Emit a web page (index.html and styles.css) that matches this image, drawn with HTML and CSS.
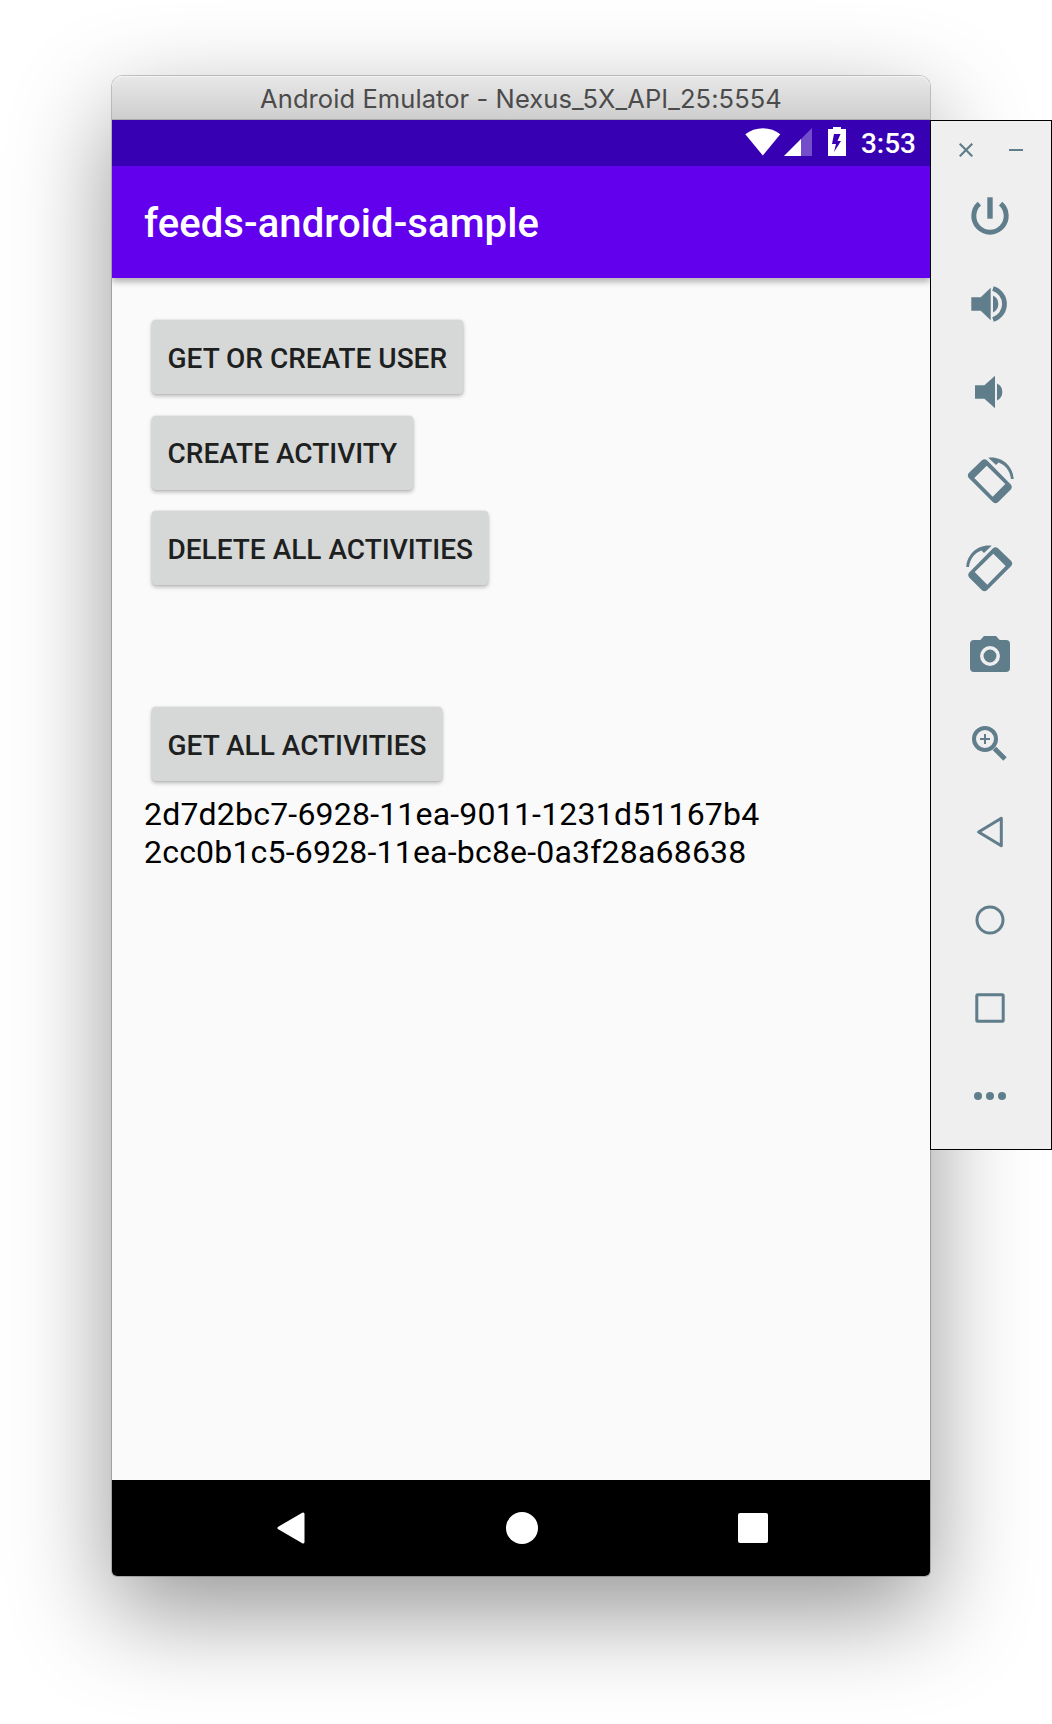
FILE: index.html
```html
<!DOCTYPE html>
<html lang="en">
<head>
<meta charset="utf-8">
<title>Android Emulator</title>
<link rel="stylesheet" href="styles.css">
</head>
<body>
<main class="desktop">
  <section class="window">
    <header class="titlebar"><span class="window-title">Android Emulator - Nexus_5X_API_25:5554</span></header>
    <div class="statusbar">
      <svg class="wifi" width="36" height="28" viewBox="0 0 36 28"><path d="M.3 6.2C10-1.9 26-1.9 35.3 6.2L17.8 27.5z"/></svg>
      <svg class="signal" width="28" height="28" viewBox="0 0 28 28"><path opacity=".3" d="M0 28 28 0v28z"/><path d="M0 28 17 11v17z"/></svg>
      <svg class="battery" width="18" height="29" viewBox="0 0 18 29"><path fill-rule="evenodd" d="M5 0h8v2h5v27H0V2h5zM6 7 4 17h4L6 25l7-11H9.500l3-7z"/></svg>
      <span class="clock">3:53</span>
    </div>
    <div class="appbar"><h1 class="app-title">feeds-android-sample</h1></div>
    <div class="content">
      <div class="actions">
        <button class="btn btn-user"><span>GET OR CREATE USER</span></button>
        <button class="btn btn-create"><span>CREATE ACTIVITY</span></button>
        <button class="btn btn-delete"><span>DELETE ALL ACTIVITIES</span></button>
      </div>
      <button class="btn btn-list"><span>GET ALL ACTIVITIES</span></button>
      <div class="ids">
        <div>2d7d2bc7-6928-11ea-9011-1231d51167b4</div>
        <div>2cc0b1c5-6928-11ea-bc8e-0a3f28a68638</div>
      </div>
    </div>
    <nav class="navbar">
      <svg width="32" height="32" viewBox="0 0 32 32"><path d="M4 16 28 2v28z" stroke="#fff" stroke-width="3" stroke-linejoin="round"/></svg>
      <svg width="32" height="32" viewBox="0 0 32 32"><circle cx="16" cy="16" r="16"/></svg>
      <svg width="32" height="32" viewBox="0 0 32 32"><rect x="1" y="1" width="30" height="30" rx="2"/></svg>
    </nav>
  </section>
  <aside class="toolbar">
    <div class="window-controls">
      <svg width="14" height="14" viewBox="0 0 14 14"><path class="line" stroke-width="2.200" d="m.7.7 12.600 12.600M13.300.7.7 13.300"/></svg>
      <svg width="14" height="14" viewBox="0 0 14 14"><path d="M0 6h14v2H0z"/></svg>
    </div>
    <svg class="tool" viewBox="-44 -44 88 88"><path class="line" stroke-width="5" d="M-10.600-12.300A16.200 16.200 0 1 0 10.600-12.300"/><path d="M-2.700-18.700h5.400V2.700h-5.400z"/></svg>
    <svg class="tool" viewBox="-44 -44 88 88"><path d="M-18.700-6.700h9.400L.7-16.300v32.600l-10-9.600h-9.400zM3-8.400a9.300 9.300 0 0 1 0 16.800z"/><path class="line" stroke-width="4.800" d="M3-15.500a16.200 16.200 0 0 1 0 31"/></svg>
    <svg class="tool" viewBox="-44 -44 88 88"><path d="M-15-6.700h9.400L5-16.200v32.400L-5.600 6.700H-15zM7-8.400a9.300 9.300 0 0 1 0 16.800z"/></svg>
    <svg class="tool" viewBox="-44 -44 88 88"><path fill-rule="evenodd" d="M-8-19.800q2.500-2 5 0L20.800 4.500q2 2.500 0 5L8 22.200q-2.500 2-5 0L-21.200-2q-2-2.500 0-5zM-3.300-14.300-15.700-2 2.700 16.700 15.300 4z"/><path d="M-1.700-22.300C12-24 23-14 23.700-1H21c-.8-8-5.500-14-12.300-16.600L6-15z"/></svg>
    <svg class="tool" viewBox="-44 -44 88 88"><g transform="scale(-1 1)"><path fill-rule="evenodd" d="M-8-19.800q2.500-2 5 0L20.800 4.500q2 2.500 0 5L8 22.200q-2.500 2-5 0L-21.200-2q-2-2.500 0-5zM-3.300-14.300-15.700-2 2.700 16.700 15.300 4z"/><path d="M-1.700-22.300C12-24 23-14 23.700-1H21c-.8-8-5.500-14-12.300-16.600L6-15z"/></g></svg>
    <svg class="tool" viewBox="-44 -44 88 88"><path d="M-16-16h6.300L-6-20H6l3.700 4H16q4 0 4 4v24q0 4-4 4h-32q-4 0-4-4v-24q0-4 4-4z"/><circle class="lens" r="8.200"/></svg>
    <svg class="tool" viewBox="-44 -44 88 88"><circle class="line" stroke-width="4" cx="-5" cy="-5" r="11"/><path class="line" stroke-width="2" d="M-10-5H0M-5-10V0"/><path class="line" stroke-width="4.800" d="M4.500 4.500 15 15"/></svg>
    <svg class="tool" viewBox="-44 -44 88 88"><path class="line" stroke-width="3" stroke-linejoin="round" d="M-11.400 0 11.300-13.700v27.400z"/></svg>
    <svg class="tool" viewBox="-44 -44 88 88"><circle class="line" stroke-width="3" r="13"/></svg>
    <svg class="tool" viewBox="-44 -44 88 88"><rect class="line" stroke-width="3" x="-13.200" y="-13.200" width="26.400" height="26.400" rx="1"/></svg>
    <svg class="tool" viewBox="-44 -44 88 88"><circle cx="-12" r="4"/><circle r="4"/><circle cx="12" r="4"/></svg>
  </aside>
</main>
</body>
</html>
```
FILE: styles.css
```css
* { box-sizing: border-box; }
body { margin: 0; background: #fff; font-family: Roboto, "Liberation Sans", sans-serif; }
svg { display: block; flex: none; }
.desktop { display: flex; align-items: flex-start; width: 1052px; height: 1724px; padding: 76px 0 0 112px; overflow: hidden; }
.window {
  display: flex; flex-direction: column; flex: none; width: 818px; height: 1500px;
  border-radius: 11px 11px 5px 5px; background: #fafafa;
  box-shadow: 0 0 0 1px rgba(0,0,0,.2), 0 36px 100px rgba(0,0,0,.42);
}
.titlebar {
  height: 44px; display: flex; align-items: center; justify-content: center;
  padding-top: 2px; border-radius: 11px 11px 0 0; border-bottom: 1px solid #aaa;
  background: linear-gradient(#e8e8e8, #cecece); box-shadow: inset 0 1px #f4f4f4;
}
.window-title { font: 400 25.500px/32px Inter, sans-serif; letter-spacing: .08px; color: #4b4b4b; white-space: nowrap; }
.statusbar { height: 46px; display: flex; align-items: flex-start; justify-content: flex-end; padding: 8px 14px 0 0; background: #3700b3; }
.statusbar svg { fill: #fff; }
.signal { margin-left: 3px; }
.battery { margin: -1px 15px 0 16px; }
.clock { font-size: 28px; font-weight: 500; line-height: 32px; color: #fff; }
.appbar { height: 111.500px; display: flex; align-items: center; position: relative; padding: 4px 0 0 32px; background: #6200ee; box-shadow: 0 4px 6px rgba(0,0,0,.28); clip-path: inset(0 0 -14px 0); }
.app-title { margin: 0; font-size: 40px; font-weight: 500; line-height: 48px; letter-spacing: .08px; color: #fff; white-space: nowrap; }
.content { flex: 1; display: flex; flex-direction: column; align-items: flex-start; padding: 42.500px 32px 0; }
.actions { display: flex; flex-direction: column; align-items: flex-start; gap: 21.500px; }
.btn {
  display: flex; align-items: center; height: 74px; margin: 0 0 0 7.500px; padding: 3px 0 0 16px;
  border: 0; border-radius: 4px; background: #d6d7d7; color: #1e1f1f;
  box-shadow: 0 2px 4px rgba(0,0,0,.28), 0 0 2px rgba(0,0,0,.14);
  font: 500 28px/32px Roboto, sans-serif; white-space: nowrap;
}
.btn-user { width: 311px; }
.btn-create { width: 261px; }
.btn-delete { width: 336px; }
.btn-list { width: 290px; margin-top: 122px; }
.ids { margin-top: 15px; font-size: 32px; line-height: 37.500px; letter-spacing: .2px; color: #000; white-space: nowrap; }
.navbar { height: 96px; display: flex; align-items: center; justify-content: center; gap: 199px; padding-left: 2px; background: #000; border-radius: 0 0 5px 5px; }
.navbar svg { fill: #fff; }
.toolbar { flex: none; width: 122px; height: 1030px; margin-top: 44px; border: 1px solid #000; background: #efefef; position: relative; }
.toolbar svg { fill: #607d8b; }
.toolbar .line { fill: none; stroke: #607d8b; }
.toolbar .lens { fill: none; stroke: #efefef; stroke-width: 3.500px; }
.window-controls { height: 51px; display: flex; gap: 36px; padding: 22px 0 0 28px; }
.tool { width: 88px; height: 88px; margin-left: 15px; }
```
